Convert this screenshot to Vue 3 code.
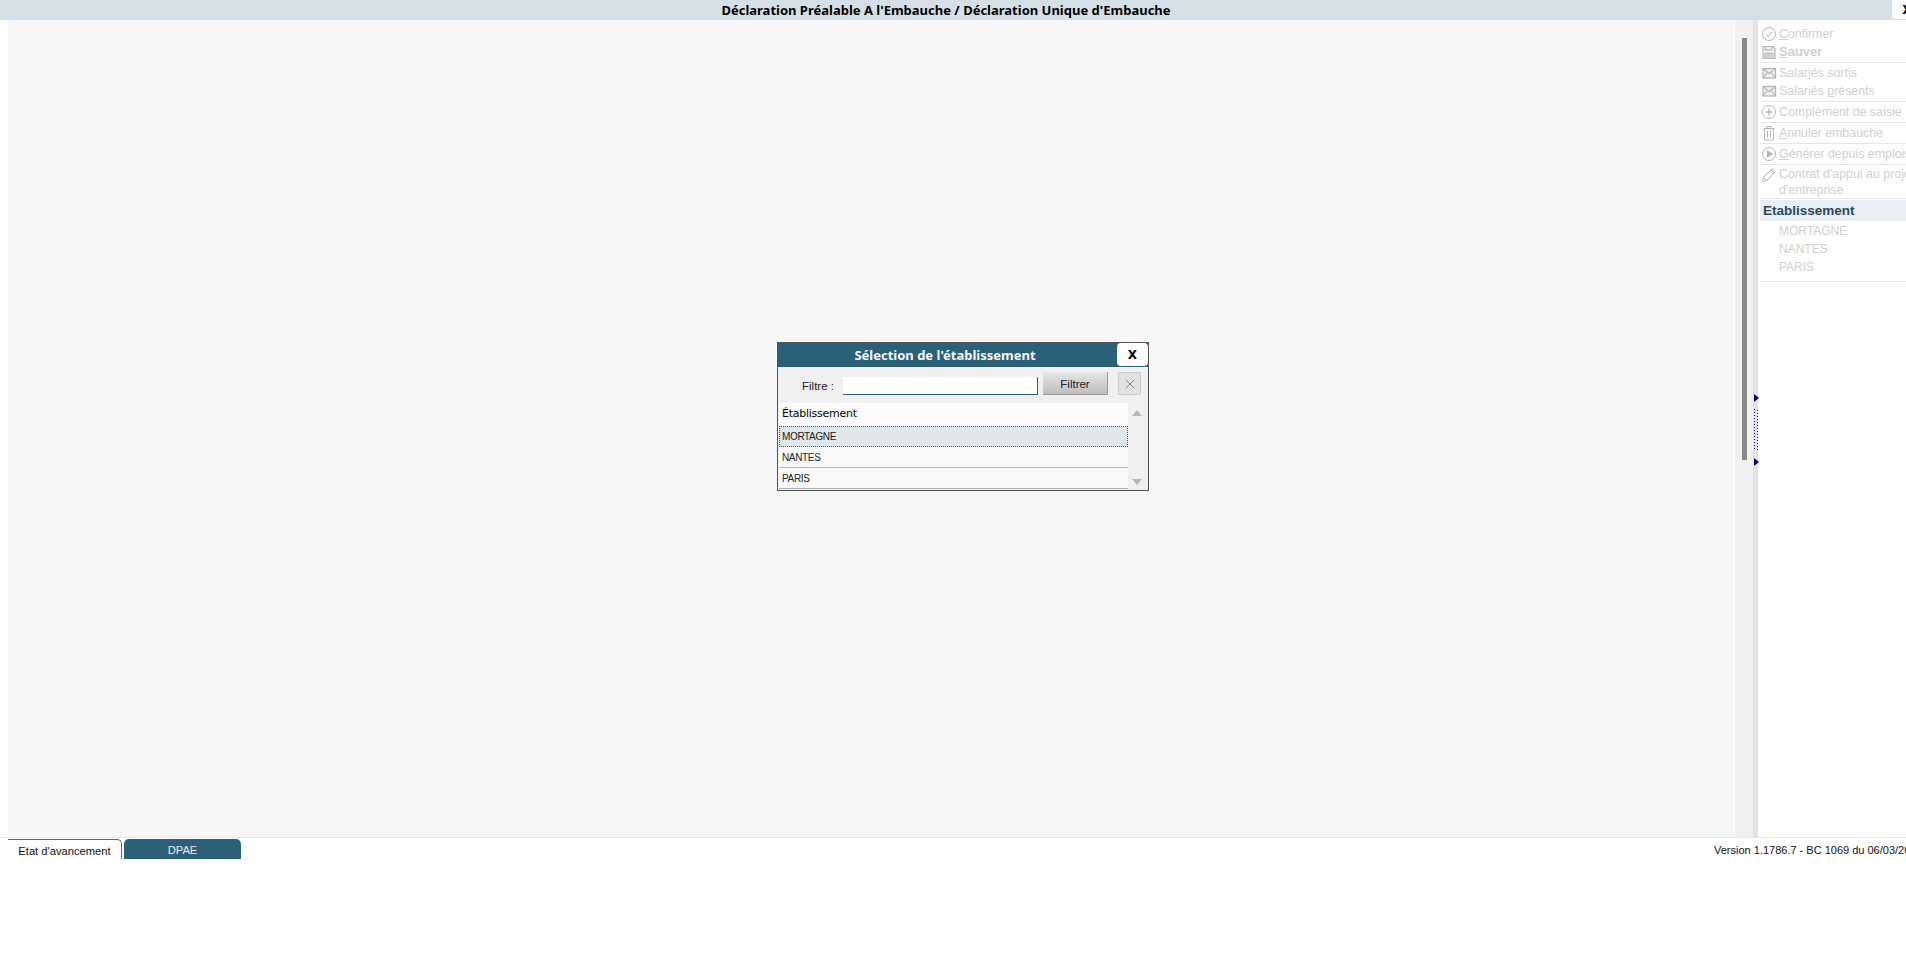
<script setup>
const groups = [
  [
    { icon: 'check', html: ['', 'C', 'onfirmer'] },
    { icon: 'save', html: ['', 'S', 'auver'], bold: true }
  ],
  [
    { icon: 'mail', html: ['Salar', 'i', 'és sortis'] },
    { icon: 'mail', html: ['Salariés ', 'p', 'résents'] }
  ],
  [{ icon: 'plus', html: ['Complément de saisie', '', ''] }],
  [{ icon: 'trash', html: ['', 'A', 'nnuler embauche'] }],
  [{ icon: 'play', html: ['', 'G', 'énérer depuis emplois'] }],
  [{ icon: 'pen', html: ['Contrat d\'appui au projet', '', ''], second: 'd\'entreprise', wrap: true }]
]
const places = ['MORTAGNE', 'NANTES', 'PARIS']
const rows = ['MORTAGNE', 'NANTES', 'PARIS']
</script>

<template>
  <div class="page">
    <header class="titlebar">
      <span class="title">Déclaration Préalable A l'Embauche / Déclaration Unique d'Embauche</span>
      <button class="close-top">X</button>
    </header>

    <div class="main">
      <div class="margin"></div>
      <div class="canvas"></div>
      <div class="scrollzone"><div class="thumb"></div></div>
      <div class="splitter">
        <span class="arrow a1"></span>
        <span class="dots"></span>
        <span class="arrow a2"></span>
      </div>
      <aside class="side">
        <div v-for="(g, i) in groups" :key="i" class="group">
          <div v-for="it in g" :key="it.html.join('')" class="item" :class="{ bold: it.bold, wrap: it.wrap }">
            <svg class="ic" viewBox="0 0 16 16" fill="none" stroke="#b4b4b4" stroke-width="1">
              <template v-if="it.icon === 'check'">
                <circle cx="8" cy="8" r="6.5" />
                <path d="M5 8l2.2 2.2L11 6" />
              </template>
              <template v-else-if="it.icon === 'save'">
                <path d="M2 2.5h10l2 2v10H2z" fill="#ececec" stroke-width="1.2" />
                <path d="M4.5 2.5v3.5h6.5V2.5M4 14.5V9.5h8v5M5.5 11.2h5M5.5 12.9h5" />
              </template>
              <template v-else-if="it.icon === 'mail'">
                <rect x="2" y="3.5" width="12.5" height="9.5" fill="#f0f0f0" stroke-width="1.3" />
                <path d="M2 3.5l6.2 5 6.3-5M2 13l4.6-5.8M14.5 13L9.9 7.2" stroke-width="1.1" />
              </template>
              <template v-else-if="it.icon === 'plus'">
                <circle cx="8" cy="8" r="6.5" />
                <path d="M8 4.5v7M4.5 8h7" stroke-width="1.3" />
              </template>
              <template v-else-if="it.icon === 'trash'">
                <path d="M2.5 3.5h11M6 3.5V1.5h4v2M3.5 3.5v11.5h9V3.5M6.5 6v6.5M9.5 6v6.5" />
              </template>
              <template v-else-if="it.icon === 'play'">
                <circle cx="8" cy="8" r="6.5" />
                <path d="M6.3 4.8l5 3.2-5 3.2z" fill="#b4b4b4" />
              </template>
              <template v-else>
                <path d="M1.5 14.5l1-4L11.5 1.5l3 3-9 9zM2.5 10.5l3 3M10 3l3 3" />
              </template>
            </svg>
            <span class="label">{{ it.html[0] }}<u v-if="it.html[1]">{{ it.html[1] }}</u>{{ it.html[2] }}<template v-if="it.second"><br>{{ it.second }}</template></span>
          </div>
        </div>
        <div class="section">Etablissement</div>
        <div class="places">
          <div v-for="p in places" :key="p" class="place">{{ p }}</div>
        </div>
      </aside>

      <div class="dialog">
        <div class="dlg-head">
          <span class="dlg-title">Sélection de l'établissement</span>
          <button class="dlg-close">X</button>
        </div>
        <div class="dlg-filter">
          <span class="f-label">Filtre :</span>
          <span class="f-input"></span>
          <button class="f-btn">Filtrer</button>
          <button class="f-clear">
            <svg viewBox="0 0 12 12" width="12" height="12" fill="none" stroke="#8a8a8a" stroke-width="1"><path d="M1.5 1.5l9 9M10.5 1.5l-9 9" /></svg>
          </button>
        </div>
        <div class="dlg-grid">
          <div class="list">
            <div class="list-head">Établissement</div>
            <div v-for="(r, i) in rows" :key="r" class="row" :class="{ sel: i === 0 }">{{ r }}</div>
          </div>
          <div class="scroll">
            <span class="up"></span>
            <span class="down"></span>
          </div>
        </div>
      </div>
    </div>

    <footer class="footer">
      <div class="tabs">
        <div class="tab active">Etat d'avancement</div>
        <div class="tab dark">DPAE</div>
      </div>
      <div class="version">Version 1.1786.7 - BC 1069 du 06/03/2024</div>
    </footer>
  </div>
</template>

<style>
html, body { margin: 0; background: #fff; overflow: hidden; }
</style>

<style scoped>
.page {
  width: 1906px;
  height: 960px;
  overflow: hidden;
  background: #fff;
  display: flex;
  flex-direction: column;
  font-family: "Liberation Sans", Arial, sans-serif;
}
.titlebar {
  height: 20px;
  flex: none;
  background: #d5e0e6;
  position: relative;
  display: flex;
  justify-content: center;
  align-items: center;
}
.title {
  font: bold 13px "Noto Sans", Tahoma, sans-serif;
  color: #000;
  transform: translateX(-7px);
}
.close-top {
  position: absolute;
  left: 1892px;
  top: 0;
  width: 30px;
  height: 19px;
  border: none;
  border-radius: 0 0 4px 4px;
  background: #fff;
  font: bold 12px "DejaVu Sans", sans-serif;
  padding: 0;
  color: #000;
}
.main {
  height: 818px;
  flex: none;
  display: flex;
  position: relative;
  border-bottom: 1px solid #e8e8e8;
  box-sizing: border-box;
}
.margin { width: 8px; background: #fff; flex: none; }
.canvas { flex: 1; background: #f6f6f6; border-right: 1px solid #fdfdfd; }
.scrollzone {
  width: 18px;
  flex: none;
  background: #f0f0f0;
  position: relative;
}
.thumb {
  width: 5px;
  height: 422px;
  margin: 18px 0 0 7px;
  background: #888;
}
.splitter {
  width: 5px;
  flex: none;
  background: #e4e4e4;
  position: relative;
}
.arrow {
  position: absolute;
  left: 1px;
  width: 0;
  height: 0;
  border-top: 4px solid transparent;
  border-bottom: 4px solid transparent;
  border-left: 5px solid #00008b;
}
.a1 { top: 374px; }
.a2 { top: 438px; }
.dots {
  position: absolute;
  left: 1px;
  top: 389px;
  width: 4px;
  height: 41px;
  background:
    repeating-linear-gradient(#0000a0 0 1px, transparent 1px 3px) left top / 1px 100% no-repeat,
    repeating-linear-gradient(transparent 0 1px, #0000a0 1px 2px, transparent 2px 3px) right top / 1px 100% no-repeat;
}
.side {
  width: 148px;
  flex: none;
  background: #fff;
  overflow: hidden;
  white-space: nowrap;
  color: #cfcfcf;
  font-size: 12.4px;
  padding-top: 5px;
  box-sizing: border-box;
}
.group {
  margin-left: 2px;
  border-bottom: 1px solid #e6e6e6;
  padding-bottom: 1px;
  margin-bottom: 1px;
  width: 190px;
}
.group:last-of-type { border-bottom: none; margin-bottom: 0; }
.item {
  display: flex;
  align-items: center;
  height: 18px;
  gap: 2px;
}
.item.bold { font-weight: bold; font-size: 13px; }
.item.bold .label { margin-top: -2px; }
.item.wrap {
  height: 30px;
  align-items: flex-start;
  line-height: 15.5px;
  padding-top: 1px;
}
.ic { width: 16px; height: 16px; flex: none; margin-left: 1px; }
.label { display: block; }
.section {
  height: 21px;
  background: #e8eef1;
  margin-left: 2px;
  padding-left: 3px;
  color: #2a4a5c;
  font: bold 13.5px/21px "Liberation Sans", Arial, sans-serif;
}
.places {
  margin-left: 2px;
  padding: 1px 0 5px 19px;
  border-bottom: 1px solid #e6e6e6;
  font-size: 12px;
}
.place { height: 18px; line-height: 18px; }

.dialog {
  position: absolute;
  left: 777px;
  top: 322px;
  width: 372px;
  height: 149px;
  box-sizing: border-box;
  border: 1px solid #555;
  background: #f0f0f0;
}
.dlg-head {
  height: 24px;
  background: #2a6179;
  position: relative;
  display: flex;
  align-items: center;
  justify-content: center;
  box-sizing: border-box;
}
.dlg-title {
  font: bold 13px "Noto Sans", sans-serif;
  color: #f4f7f8;
  transform: translateX(-18px);
}
.dlg-close {
  position: absolute;
  left: 339px;
  top: 0;
  width: 31px;
  height: 23px;
  border: none;
  border-radius: 4px;
  background: #fff;
  padding: 0;
  color: #000;
  font: bold 12px "DejaVu Sans", sans-serif;
}
.dlg-filter {
  height: 36px;
  display: flex;
  align-items: flex-start;
  box-sizing: border-box;
  padding-left: 24px;
  padding-top: 5px;
}
.f-label { font-size: 11.5px; width: 41px; color: #222; margin-top: 8px; }
.f-input {
  width: 195px;
  height: 18px;
  background: #fff;
  border-right: 1px solid #2a6179;
  border-bottom: 1px solid #2a6179;
  box-sizing: border-box;
  margin-top: 5px;
}
.f-btn {
  width: 65px;
  height: 23px;
  margin-left: 5px;
  border: none;
  border-right: 1px solid #999;
  border-bottom: 1px solid #999;
  background: linear-gradient(#e6e6e6, #bdbdbd);
  font: 11.5px "Liberation Sans", sans-serif;
  color: #222;
  padding: 1px 0 0;
}
.f-clear {
  width: 23px;
  height: 23px;
  margin-left: 10px;
  border: 1px solid #ccc;
  background: #e2e2e2;
  padding: 0;
  display: flex;
  align-items: center;
  justify-content: center;
}
.dlg-grid { display: flex; height: 87px; padding-left: 1px; }
.list { width: 349px; flex: none; }
.list-head {
  height: 23px;
  background: #fcfcfc;
  font: 11px/21px "DejaVu Sans", sans-serif;
  letter-spacing: -0.25px;
  padding-left: 3px;
  color: #000;
}
.row {
  height: 21px;
  line-height: 21px;
  box-sizing: border-box;
  background: #f9f9f9;
  border-bottom: 1px solid #b4b4b4;
  font-size: 10px;
  letter-spacing: -0.35px;
  padding-left: 3px;
  color: #222;
}
.row.sel {
  background: #dfe6ea;
  border: 1px dotted #555;
  padding-left: 2px;
  line-height: 19px;
}
.scroll {
  flex: 1;
  position: relative;
}
.up, .down {
  position: absolute;
  left: 4px;
  width: 0;
  height: 0;
  border-left: 5px solid transparent;
  border-right: 5px solid transparent;
}
.up { top: 7px; border-bottom: 6px solid #b5b5b5; }
.down { top: 76px; border-top: 6px solid #b5b5b5; }

.footer {
  height: 32px;
  flex: none;
  display: flex;
  justify-content: space-between;
  padding: 1px 0 0 8px;
  box-sizing: border-box;
  position: relative;
}
.tabs { display: flex; gap: 2px; height: 20px; }
.tab {
  height: 20px;
  line-height: 22px;
  box-sizing: border-box;
  text-align: center;
  font-size: 11.2px;
}
.tab.active {
  width: 114px;
  border-top: 1px solid #666;
  border-right: 1px solid #666;
  border-radius: 0 5px 0 0;
  color: #111;
  background: #fff;
}
.tab.dark {
  width: 117px;
  background: #2a6179;
  color: #e8eef1;
  border-radius: 5px 5px 0 0;
}
.version {
  position: absolute;
  left: 1714px;
  top: 6px;
  font-size: 11px;
  color: #111;
  white-space: nowrap;
}
</style>
